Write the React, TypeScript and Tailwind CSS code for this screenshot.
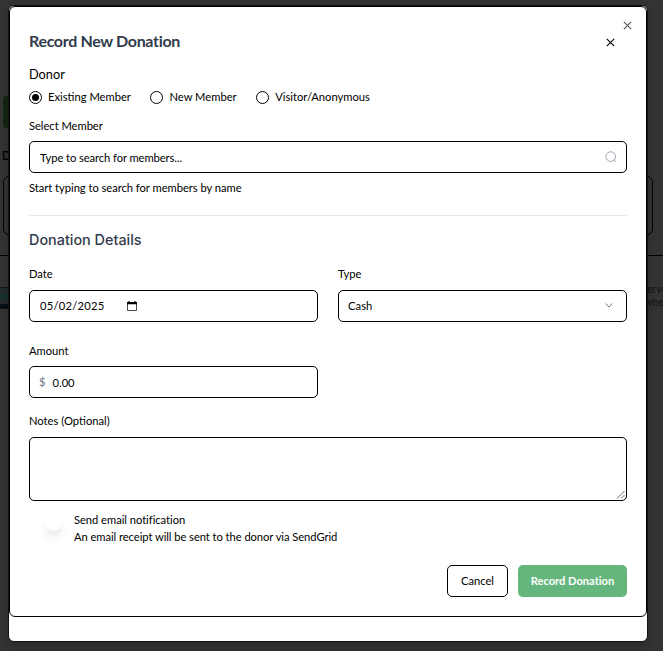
import React from "react";

const Cross = ({ className }: { className: string }) => (
  <svg className={className} viewBox="0 0 9 9" fill="none" stroke="currentColor" strokeWidth="1.1">
    <path d="M.8.8 8.2 8.2M8.2.8.8 8.2" />
  </svg>
);

function Radio({ label, checked }: { label: string; checked?: boolean }) {
  return (
    <label className="flex h-[14px] items-center gap-[6px]">
      <span className="flex size-[13px] items-center justify-center rounded-full border border-black">
        {checked && <span className="size-[7px] rounded-full bg-black" />}
      </span>
      <span className="tracking-normal">{label}</span>
    </label>
  );
}

function Backdrop() {
  return (
    <div className="absolute inset-0 overflow-hidden bg-[#333333] text-[#111111]">
      <div className="absolute left-[3px] top-[96px] h-[32px] w-[20px] rounded-[4px] bg-[#12280f]" />
      <span className="absolute left-[2px] top-[149px] font-['Inter',sans-serif] text-[12px] font-medium leading-[14px] text-black">D</span>
      <div className="absolute left-[3px] top-[176px] h-[59px] w-[650px] rounded-[6px] border border-black" />
      <div className="absolute left-0 top-[255px] h-px w-full bg-black" />
      <div className="absolute -left-[10px] top-[287px] h-[22px] w-[40px] border-y border-[#10151c] bg-[#252b2e]" />
      <div className="absolute left-0 top-[304px] h-[4px] w-[20px] bg-[#080d16]" />
      <span className="absolute left-[-1px] top-[290px] text-[11px] font-bold leading-[11px] text-[#0c3b2c]">os</span>
      <span className="absolute left-[647px] top-[284px] font-['Inter',sans-serif] text-[9.6px] leading-[12px] tracking-normal">erve</span>
      <span className="absolute left-[645px] top-[297px] font-['Inter',sans-serif] text-[9.6px] leading-[12px] tracking-normal">whe</span>
    </div>
  );
}

export default function App() {
  return (
    <div className="relative h-[651px] w-[663px] overflow-hidden pl-[8px] pt-[5px] font-['Lato',sans-serif] text-[11.2px] leading-[14px] tracking-[-0.04px] text-black">
      <Backdrop />
      <div className="relative h-[637px] w-[640px] rounded-[6px] border border-[#111] bg-white shadow-[0_4px_8px_rgba(0,0,0,0.2)]">
        <div className="relative h-[611px] w-[638px] rounded-[6px] border border-black px-[19px] pt-[26px]">
          <button className="absolute right-[14px] top-[14px] text-[#555]"><Cross className="size-[9px]" /></button>
          <header className="flex h-[16px] items-center justify-between pr-[12px]">
            <h2 className="text-[16px] font-bold leading-[16px] tracking-[-0.33px] text-[#323b4c]">Record New Donation</h2>
            <Cross className="mt-[2px] size-[9px]" />
          </header>
          <h3 className="mt-[17px] text-[12.8px] leading-[16px]">Donor</h3>
          <div className="mt-[8px] flex gap-[19.5px]">
            <Radio label="Existing Member" checked />
            <Radio label="New Member" />
            <Radio label="Visitor/Anonymous" />
          </div>
          <div className="mt-[15px]">Select Member</div>
          <div className="mt-[8px] flex h-[32px] items-center justify-between rounded-[5px] border border-black pl-[10px] pr-[9px]">
            <span className="pt-[2px] tracking-[-0.08px]">Type to search for members...</span>
            <svg className="size-[12px] text-[#9ca3af]" viewBox="0 0 12 12" fill="none" stroke="currentColor">
              <circle cx="5.7" cy="5.6" r="4.8" />
              <path d="m9.1 9 2.2 2.2" />
            </svg>
          </div>
          <p className="mt-[8px]">Start typing to search for members by name</p>
          <div className="mt-[20px] h-px bg-[#e5e7eb]" />
          <h3 className="mt-[15px] font-['Inter',sans-serif] text-[14.4px] font-medium leading-[18px] tracking-normal text-[#323b4c]">Donation Details</h3>
          <div className="mt-[18px] grid grid-cols-2 gap-x-[20px]">
            <div>
              <div>Date</div>
              <div className="mt-[9px] flex h-[32px] items-center rounded-[5px] border border-black px-[10px]">
                <span className="w-[87px] tracking-[0.25px]">05/02/2025</span>
                <svg className="size-[10px]" viewBox="0 0 10 10" fill="none">
                  <path d="M.5 2h9v7.5h-9z" stroke="#333" strokeWidth=".9" />
                  <path d="M0 1h10v2.2H0zM1.5 0h1.2v1H1.5zM7.3 0h1.2v1H7.3z" fill="black" />
                </svg>
              </div>
            </div>
            <div>
              <div>Type</div>
              <div className="mt-[9px] flex h-[32px] items-center justify-between rounded-[5px] border border-black pl-[9px] pr-[13px]">
                <span className="tracking-[0.08px]">Cash</span>
                <svg className="-mt-[2px] h-[5px] w-[8px] text-[#777]" viewBox="0 0 8 5" fill="none" stroke="currentColor"><path d="m.5.5 3.5 3.5L7.5.5" /></svg>
              </div>
            </div>
          </div>
          <div className="mt-[22px] tracking-normal">Amount</div>
          <div className="mt-[8px] flex h-[32px] w-[289px] items-center rounded-[5px] border border-black px-[9px]">
            <span className="w-[13.5px] text-[#6b7280]">$</span>
            <span className="pt-[2px] tracking-normal">0.00</span>
          </div>
          <div className="mt-[16px] tracking-normal">Notes (Optional)</div>
          <div className="mt-[9px] flex h-[64px] items-end justify-end rounded-[5px] border border-black p-px">
            <svg className="size-[9px]" viewBox="0 0 9 9" fill="none" stroke="#555" strokeWidth=".9"><path d="m1 8.5 7.5-7.5M5 8.5l3.5-3.5" /></svg>
          </div>
          <div className="mt-[12px] flex h-[32px] pl-[16px]">
            <span className="mt-[1px] size-[17px] rounded-full bg-white shadow-[0_8px_12px_-2px_rgba(0,0,0,0.1),0_3px_5px_-3px_rgba(0,0,0,0.1)]" />
            <div className="ml-[12px]">
              <div>Send email notification</div>
              <div className="mt-[3px] tracking-[-0.06px]">An email receipt will be sent to the donor via SendGrid</div>
            </div>
          </div>
          <footer className="mt-[20px] flex justify-end gap-[10px]">
            <button className="h-[32px] w-[61px] rounded-[5px] border border-black">Cancel</button>
            <button className="h-[32px] w-[109px] rounded-[5px] bg-[#64b67c] font-bold text-white">Record Donation</button>
          </footer>
        </div>
      </div>
    </div>
  );
}
